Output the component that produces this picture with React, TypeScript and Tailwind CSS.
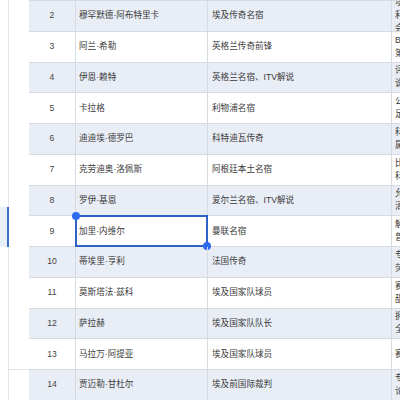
import React from "react";

const ROWS = [
  { n: 2, name: "穆罕默德·阿布特里卡", desc: "埃及传奇名宿", note: ["埃及队史最佳球员之一", "利物浦球迷熟悉的名字", "会说阿拉伯语"] },
  { n: 3, name: "阿兰·希勒", desc: "英格兰传奇前锋", note: ["BBC评论员", "第一次来埃及"] },
  { n: 4, name: "伊恩·赖特", desc: "英格兰名宿、ITV解说", note: ["评论风格活泼", "说话直接"] },
  { n: 5, name: "卡拉格", desc: "利物浦名宿", note: ["公开支持萨拉赫", "足球评论员"] },
  { n: 6, name: "迪迪埃·德罗巴", desc: "科特迪瓦传奇", note: ["科特迪瓦国家英雄", "属于非洲足球"] },
  { n: 7, name: "克劳迪奥·洛佩斯", desc: "阿根廷本土名宿", note: ["比赛经验丰富", "科班出身"] },
  { n: 8, name: "罗伊·基恩", desc: "爱尔兰名宿、ITV解说", note: ["允许直言不讳", "清楚比赛节奏"] },
  { n: 9, name: "加里·内维尔", desc: "曼联名宿", note: ["解说经验丰富", "曾经合作"] },
  { n: 10, name: "蒂埃里·亨利", desc: "法国传奇", note: ["专业分析", "荧幕形象好"] },
  { n: 11, name: "莫斯塔法·兹科", desc: "埃及国家队球员", note: ["赛场表现稳定", "甜蜜时刻"] },
  { n: 12, name: "萨拉赫", desc: "埃及国家队队长", note: ["拥有超高人气", "全民偶像"] },
  { n: 13, name: "马拉万·阿提亚", desc: "埃及国家队球员", note: ["赛季表现出色"] },
  { n: 14, name: "贾迈勒·甘杜尔", desc: "埃及前国际裁判", note: ["专业判罚分析", "论述清晰"] },
];

const font = "font-['Liberation_Sans','Noto_Sans_CJK_SC',sans-serif]";

export default function App() {
  return (
    <div className={`w-[400px] h-[400px] overflow-hidden bg-white flex ${font} text-[8.6px] text-[#3a3a3a]`}>
      {/* 行号侧栏 */}
      <div className="w-[29px] shrink-0 flex">
        <div className="w-[9px] flex flex-col border-r border-[#e3e5e8]">
          <div className="h-[207px]" />
          <div className="h-[40px] bg-[#e9f0fb] border-r-2 border-[#3d6fc9] -mr-px" />
        </div>
        <div className="flex-1 flex flex-col">
          <div className="h-[369px]" />
          <div className="border-t border-[#e3e5e8]" />
        </div>
      </div>

      {/* 表格 */}
      <div className="flex-1 flex flex-col border-t border-[#d6dae1] mt-0">
        {ROWS.map((r, i) => {
          const even = i % 2 === 0;
          return (
            <div
              key={r.n}
              className={`grid grid-cols-[47px_132px_184px_1fr] h-[30.75px] shrink-0 border-b border-[#d6dae1] ${even ? "bg-[#e9eef6]" : "bg-white"}`}
            >
              <div className="flex items-center justify-center border-r border-[#d6dae1] text-[#444]">
                {r.n}
              </div>
              <div className="relative flex items-center pl-[3px] border-r border-[#d6dae1] whitespace-nowrap">
                {r.name}
                {r.n === 9 && (
                  <div className="absolute -left-px -top-px -right-px -bottom-px border-2 border-[#2f62c6]">
                    <div className="absolute -left-[5px] -top-[5px] w-[8px] h-[8px] rounded-full bg-[#2d6cf0]" />
                    <div className="absolute -right-[5px] -bottom-[5px] w-[8px] h-[8px] rounded-full bg-[#2d6cf0]" />
                  </div>
                )}
              </div>
              <div className="flex items-center pl-[4px] border-r border-[#d6dae1] whitespace-nowrap">
                {r.desc}
              </div>
              <div className="flex flex-col justify-center pl-[3px] overflow-hidden leading-[13px] whitespace-nowrap">
                {r.note.map((line) => (
                  <span key={line}>{line}</span>
                ))}
              </div>
            </div>
          );
        })}
      </div>
    </div>
  );
}
